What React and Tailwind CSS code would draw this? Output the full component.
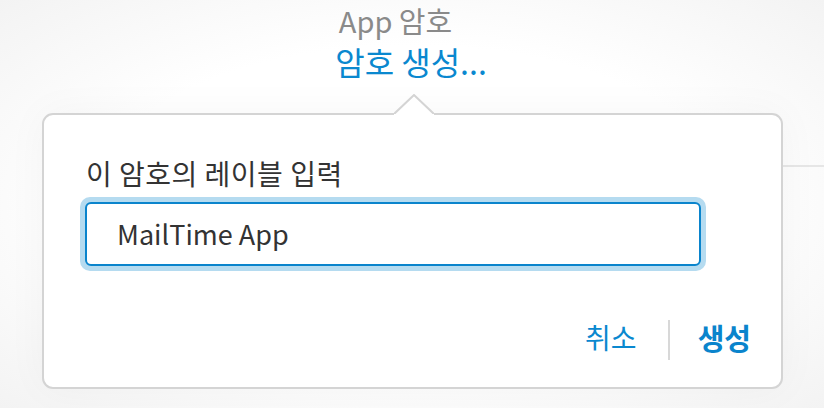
const font = { fontFamily: '"Noto Sans CJK KR", "Noto Sans", sans-serif' }

const App = () => {
  return (
    <div
      className="w-[824px] h-[408px] overflow-hidden bg-[radial-gradient(ellipse_at_center,#ffffff_55%,#f3f3f3_100%)] relative"
      style={font}
    >
      <div className="absolute right-0 top-[165px] w-[42px] h-[2px] bg-[#e6e6e6]" />
      <div className="flex flex-col items-center">
        <div className="text-[29px] leading-[40px] text-[#8a8a8a] mr-[33px]">App 암호</div>
        <div className="text-[32px] leading-[44px] text-[#0a88cf] mr-[2px] -mt-[1px]">암호 생성...</div>
      </div>

      <div className="relative ml-[42px] mr-[41px] mt-[30px] h-[276px] rounded-[11px] border-2 border-[#d4d4d4] bg-white shadow-[0_0_40px_rgba(0,0,0,0.04)]">
        <svg className="absolute left-[350px] top-[-21px]" width="40" height="21" viewBox="0 0 40 21">
          <path d="M0 20 L20 1 L40 20" fill="#ffffff" stroke="#d4d4d4" strokeWidth="2" />
          <rect x="0" y="20" width="40" height="3" fill="#ffffff" />
        </svg>

        <div className="pl-[36px] pr-[75px] pt-[40px]">
          <div className="pl-[6px] text-[28px] leading-[36px] tracking-[0.5px] text-[#333333]">이 암호의 레이블 입력</div>
          <div className="mt-[6px] rounded-[10px] bg-[#b5dbf0] p-[5px]">
            <div className="h-[64px] rounded-[6px] border-2 border-[#0a84cc] bg-white flex items-center pl-[30px] text-[27px] text-[#333333]">
              MailTime App
            </div>
          </div>
        </div>

        <div className="absolute right-[30px] bottom-[27px] flex items-center">
          <span className="text-[28px] leading-[40px] text-[#0a88cf] -mt-[6px]">취소</span>
          <div className="ml-[31px] mr-[28px] w-[2px] h-[40px] bg-[#d8d8d8]" />
          <span className="text-[29px] leading-[40px] font-semibold text-[#0a84cc] -mt-[6px]">생성</span>
        </div>
      </div>
    </div>
  )
}

export default App
